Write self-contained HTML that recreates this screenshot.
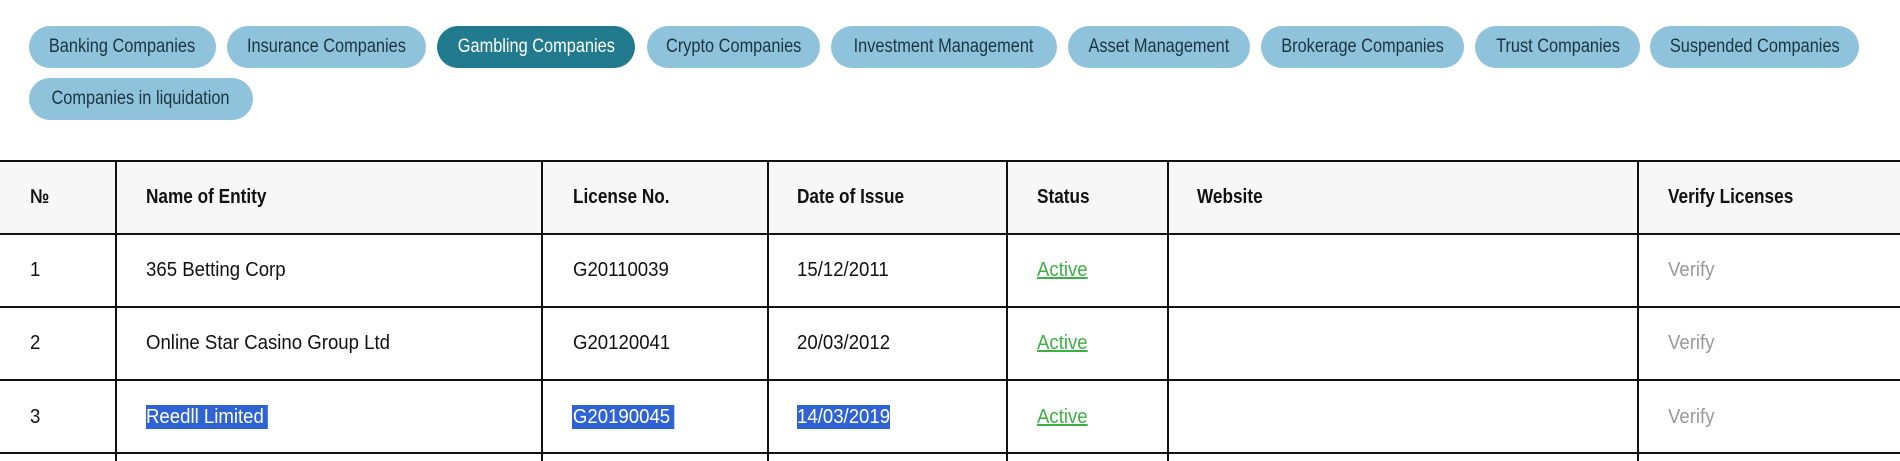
<!DOCTYPE html>
<html><head><meta charset="utf-8"><style>
*{margin:0;padding:0;box-sizing:border-box}
body{width:1900px;height:461px;background:#fff;position:relative;overflow:hidden;font-family:"Liberation Sans",sans-serif;color:#111}
.p{position:absolute;height:42px;border-radius:21px;background:#8fc3dc;color:#1b3440;font-size:19px;line-height:42px;text-align:center;white-space:nowrap}
.p span{display:inline-block;transform:scaleX(.86)}
.p.a{background:#217a8e;color:#fff}
.hl,.vl{position:absolute;background:#111}
.hl{height:1.5px;left:0;width:1900px}
.vl{width:1.5px;top:160px;height:301px}
.t{position:absolute;font-size:20px;white-space:nowrap;line-height:24px;transform:scaleX(.93);transform-origin:left center}
.h{font-weight:bold;transform:scaleX(.86)}
.g{color:#3cb043;text-decoration:underline}
.v{color:#999}
.s{background:#2f63d3;color:#fff}
</style></head><body>
<div class="p" style="left:29px;top:26px;width:187px"><span>Banking Companies</span></div>
<div class="p" style="left:227px;top:26px;width:199px"><span>Insurance Companies</span></div>
<div class="p a" style="left:437px;top:26px;width:198px"><span>Gambling Companies</span></div>
<div class="p" style="left:647px;top:26px;width:173px"><span>Crypto Companies</span></div>
<div class="p" style="left:831px;top:26px;width:226px"><span>Investment Management</span></div>
<div class="p" style="left:1068px;top:26px;width:182px"><span>Asset Management</span></div>
<div class="p" style="left:1261px;top:26px;width:203px"><span>Brokerage Companies</span></div>
<div class="p" style="left:1475px;top:26px;width:165px"><span>Trust Companies</span></div>
<div class="p" style="left:1650px;top:26px;width:209px"><span>Suspended Companies</span></div>
<div class="p" style="left:29px;top:78px;width:224px"><span>Companies in liquidation</span></div>

<div style="position:absolute;left:0;top:160px;width:1900px;height:73px;background:#f7f7f7"></div>
<div class="hl" style="top:160px"></div>
<div class="hl" style="top:233px"></div>
<div class="hl" style="top:306px"></div>
<div class="hl" style="top:379px"></div>
<div class="hl" style="top:452px"></div>
<div class="vl" style="left:115px"></div>
<div class="vl" style="left:541px"></div>
<div class="vl" style="left:767px"></div>
<div class="vl" style="left:1006px"></div>
<div class="vl" style="left:1167px"></div>
<div class="vl" style="left:1637px"></div>

<div class="t h" style="left:30px;top:185px">№</div>
<div class="t h" style="left:146px;top:185px">Name of Entity</div>
<div class="t h" style="left:573px;top:185px">License No.</div>
<div class="t h" style="left:797px;top:185px">Date of Issue</div>
<div class="t h" style="left:1037px;top:185px">Status</div>
<div class="t h" style="left:1197px;top:185px">Website</div>
<div class="t h" style="left:1668px;top:185px">Verify Licenses</div>

<div class="t" style="left:30px;top:258px">1</div>
<div class="t" style="left:146px;top:258px">365 Betting Corp</div>
<div class="t" style="left:573px;top:258px">G20110039</div>
<div class="t" style="left:797px;top:258px">15/12/2011</div>
<div class="t g" style="left:1037px;top:258px">Active</div>
<div class="t v" style="left:1668px;top:258px">Verify</div>

<div class="t" style="left:30px;top:331px">2</div>
<div class="t" style="left:146px;top:331px">Online Star Casino Group Ltd</div>
<div class="t" style="left:573px;top:331px">G20120041</div>
<div class="t" style="left:797px;top:331px">20/03/2012</div>
<div class="t g" style="left:1037px;top:331px">Active</div>
<div class="t v" style="left:1668px;top:331px">Verify</div>

<div class="t" style="left:30px;top:405px">3</div>
<div class="t s" style="left:146px;top:405px;padding-right:4px">Reedll Limited</div>
<div class="t s" style="left:572px;top:405px;padding:0 4px 0 1px">G20190045</div>
<div class="t s" style="left:797px;top:405px">14/03/2019</div>
<div class="t g" style="left:1037px;top:405px">Active</div>
<div class="t v" style="left:1668px;top:405px">Verify</div>
</body></html>
